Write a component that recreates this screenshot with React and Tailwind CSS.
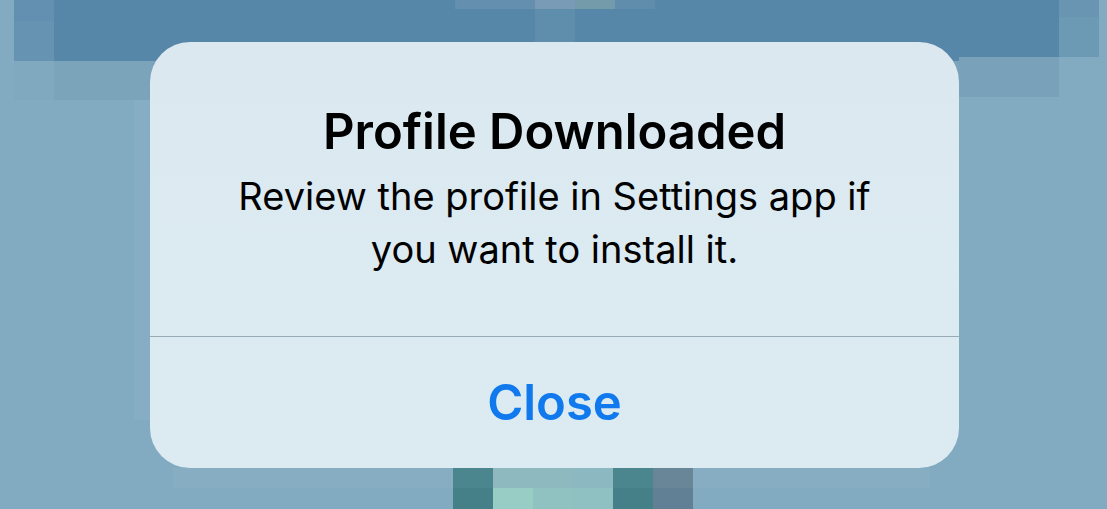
const blocks = [
  // top band and its stepped edges
  [14, 0, 1085, 57, "#5686a8"],
  [14, 57, 945, 4, "#5686a8"],
  [14, 0, 40, 21, "#6390b1"],
  [14, 21, 40, 40, "#6793b3"],
  [54, 61, 96, 39, "#7ba4ba"],
  [150, 61, 809, 39, "#7ba4ba"],
  [14, 61, 40, 39, "#80a9c0"],
  [1059, 0, 40, 17, "#6995b3"],
  [1059, 17, 40, 40, "#6c99b3"],
  [959, 57, 100, 40, "#7aa1ba"],
  [455, 0, 80, 9, "#648fae"],
  [535, 0, 40, 9, "#799bb6"],
  [575, 0, 40, 9, "#739ba9"],
  [615, 0, 40, 9, "#608dac"],
  [535, 9, 40, 33, "#5f8dac"],
  // faint tiles beside and below the alert
  [134, 100, 16, 320, "#87adc4"],
  [173, 468, 757, 20, "#87adc2"],
  // bottom blocks
  [453, 468, 40, 20, "#4b868e"],
  [453, 488, 40, 21, "#458088"],
  [493, 468, 80, 20, "#8ebabf"],
  [573, 468, 40, 20, "#8bb8c1"],
  [493, 488, 40, 21, "#97cdc4"],
  [533, 488, 40, 21, "#90c2c2"],
  [573, 488, 40, 21, "#8fc1c3"],
  [613, 468, 40, 20, "#4b868e"],
  [613, 488, 40, 21, "#458088"],
  [653, 468, 40, 20, "#698699"],
  [653, 488, 40, 21, "#628095"],
];

function Backdrop() {
  return (
    <svg
      className="absolute inset-0 h-full w-full"
      viewBox="0 0 1107 509"
      preserveAspectRatio="xMidYMin slice"
      shapeRendering="crispEdges"
      aria-hidden="true"
    >
      {blocks.map(([x, y, w, h, fill]) => (
        <rect key={`${x}-${y}-${w}`} x={x} y={y} width={w} height={h} fill={fill} />
      ))}
    </svg>
  );
}

export default function App() {
  return (
    <main className="relative min-h-screen overflow-hidden bg-[#82aac1] pt-[42px] pr-[148px] pb-10 pl-[150px] font-['Inter','Liberation_Sans',sans-serif]">
      <Backdrop />
      <section
        role="alertdialog"
        aria-labelledby="alert-title"
        aria-describedby="alert-message"
        className="relative overflow-hidden rounded-[40px] bg-linear-to-b from-[#dbe8f0] via-[#dceaf2] to-[#dbebf1]"
      >
        <div className="flex flex-col gap-2 px-20 py-[60px] text-center text-black">
          <h1 id="alert-title" className="text-[49px] leading-[60px] font-semibold">
            Profile Downloaded
          </h1>
          <p id="alert-message" className="text-[38px] leading-[53px]">
            Review the profile in Settings app if you want to install it.
          </p>
        </div>
        <button
          type="button"
          className="flex h-[132px] w-full items-center justify-center border-t border-[#97abb6] text-[49px] leading-[60px] font-semibold text-[#1079ee]"
        >
          Close
        </button>
      </section>
    </main>
  );
}
